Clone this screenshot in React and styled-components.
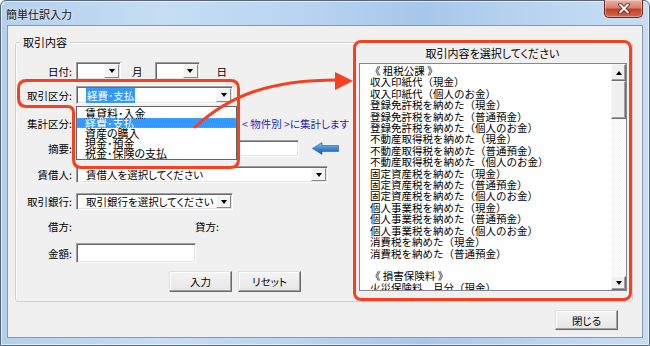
import React from "react";
import styled, { createGlobalStyle } from "styled-components";

const Global = createGlobalStyle`
  html, body { margin: 0; padding: 0; background: #fff; }
  body { font-family: "Noto Sans CJK JP", "Noto Sans", sans-serif; color: #000; }
  * { box-sizing: border-box; }
`;

const Window = styled.div`
  width: 650px;
  height: 346px;
  display: flex;
  flex-direction: column;
  border: 1px solid #56677d;
  border-radius: 6px 6px 0 0;
  padding: 0 6px 7px 6px;
  background: linear-gradient(90deg, #b3cfec 0%, #c6ddf4 25%, #b9d5f1 45%, #a7c7ea 65%, #bcd6f1 85%, #c8ddf2 100%);
  box-shadow: inset 1px 1px 0 rgba(255,255,255,0.6), inset -1px -1px 0 rgba(255,255,255,0.6);
`;

const TitleBar = styled.div`
  height: 24px;
  display: flex;
  align-items: flex-start;
  justify-content: space-between;
  flex-shrink: 0;
`;

const Title = styled.div`
  font-size: 11px;
  line-height: 26px;
  margin-left: -1px;
  color: #1b1b1b;
  font-feature-settings: "palt";
  text-shadow: 0 0 6px rgba(255,255,255,0.9);
`;

const CloseBtn = styled.div`
  width: 39px;
  height: 18px;
  margin-top: -1px;
  border: 1px solid #6a2a1e;
  border-top: none;
  border-radius: 0 0 5px 5px;
  background: linear-gradient(#eab1a5 0%, #d9806d 45%, #c1412a 55%, #d2674f 100%);
  box-shadow: inset 0 0 0 1px rgba(255,255,255,0.35);
  display: flex;
  align-items: center;
  justify-content: center;
`;

const Client = styled.div`
  flex: 1;
  background: #f0f0f0;
  border: 1px solid #8399b4;
  display: flex;
  flex-direction: column;
  padding: 16px 9px 0 7px;
`;

const GroupBox = styled.div`
  position: relative;
  height: 260px;
  border: 1px solid #d0d0d0;
  border-radius: 3px;
  box-shadow: inset 1px 1px 0 #fff;
  display: flex;
`;

const Legend = styled.div`
  position: absolute;
  top: -9px;
  left: 4px;
  padding: 0 3px;
  background: #f0f0f0;
  font-size: 11px;
  line-height: 16px;
  font-feature-settings: "palt";
`;

const Form = styled.div`
  width: 337px;
  flex-shrink: 0;
  display: flex;
  flex-direction: column;
  padding-top: 19px;
`;

const Row = styled.div`
  display: flex;
  align-items: center;
  height: ${(p) => p.$h || 18}px;
  margin-top: ${(p) => p.$mt || 0}px;
  flex-shrink: 0;
`;

const Label = styled.div`
  width: ${(p) => p.$w || 58}px;
  margin-right: 2px;
  padding-right: 2px;
  text-align: right;
  font-size: 10.5px;
  white-space: nowrap;
  flex-shrink: 0;
  font-feature-settings: "palt";
`;

const Unit = styled.div`
  font-size: 10.5px;
  margin: 0 ${(p) => p.$mr}px 0 ${(p) => p.$ml}px;
`;

const Combo = styled.div`
  position: relative;
  width: ${(p) => p.$w}px;
  height: 100%;
  background: #fff;
  border: 1px solid;
  border-color: #a0a0a0 #ffffff #ffffff #a0a0a0;
  box-shadow: inset 1px 1px 0 #696969, inset -1px -1px 0 #e3e3e3;
  display: flex;
  align-items: center;
  flex-shrink: 0;
`;

const ComboText = styled.div`
  flex: 1;
  padding-left: 9px;
  font-size: 10.5px;
  white-space: nowrap;
  overflow: hidden;
  font-feature-settings: "palt";
`;

const Selected = styled.span`
  background: #3399ff;
  color: #fff;
  padding: 0 1px;
`;

const DropBtn = styled.div`
  width: 15px;
  align-self: stretch;
  margin: 1px 1px 1px 0;
  background: #f3f3f3;
  border: 1px solid;
  border-color: #fafafa #8a8a8a #8a8a8a #fafafa;
  display: flex;
  align-items: center;
  justify-content: center;
  flex-shrink: 0;
`;

const Tri = styled.div`
  width: 0;
  height: 0;
  border-left: 3.5px solid transparent;
  border-right: 3.5px solid transparent;
  ${(p) => (p.$up ? "border-bottom: 4px solid #000;" : "border-top: 4px solid #000;")}
`;

const DropList = styled.div`
  position: absolute;
  top: 19px;
  left: -1px;
  width: 161px;
  height: 54px;
  background: #fff;
  border: 1px solid #646464;
  padding-top: 1px;
  z-index: 2;
`;

const DropItem = styled.div`
  height: 10px;
  line-height: 10px;
  padding-left: 8px;
  font-size: 11px;
  white-space: nowrap;
  font-feature-settings: "palt";
  ${(p) =>
    p.$active &&
    `background: #3399ff; color: #fff; outline: 1px dotted #d08a3c; outline-offset: -1px;`}
`;

const Note = styled.div`
  margin-left: 9px;
  font-size: 10.5px;
  color: #1f1fb8;
  white-space: nowrap;
  font-feature-settings: "palt";
`;

const TextInput = styled.div`
  width: ${(p) => p.$w}px;
  height: ${(p) => p.$h}px;
  background: #fff;
  border: 1px solid;
  border-color: #a0a0a0 #ffffff #ffffff #a0a0a0;
  box-shadow: inset 1px 1px 0 #696969, inset -1px -1px 0 #e3e3e3;
  flex-shrink: 0;
`;

const ArrowIcon = styled.svg`
  margin-left: 13px;
  flex-shrink: 0;
`;

const Button = styled.div`
  width: 63px;
  height: ${(p) => p.$h || 21}px;
  margin-left: ${(p) => p.$ml || 0}px;
  background: linear-gradient(#f4f4f4, #e6e6e6);
  border: 1px solid;
  border-color: #e0e0e0 #6a6a6a #6a6a6a #e0e0e0;
  box-shadow: inset -1px -1px 0 #a0a0a0, inset 1px 1px 0 #fff;
  display: flex;
  align-items: center;
  justify-content: center;
  font-size: 10.5px;
  font-feature-settings: "palt";
  flex-shrink: 0;
`;

const Panel = styled.div`
  width: 279px;
  height: 261px;
  margin-top: -3px;
  border: 3px solid #f7401f;
  border-radius: 8px;
  display: flex;
  flex-direction: column;
  flex-shrink: 0;
`;

const PanelTitle = styled.div`
  height: 20px;
  line-height: 21px;
  text-align: center;
  font-size: 11px;
  font-feature-settings: "palt";
`;

const ListBox = styled.div`
  margin: 0 2px 0 3px;
  height: 228px;
  background: #fff;
  border: 1px solid #828790;
  display: flex;
`;

const ListItems = styled.div`
  flex: 1;
  overflow: hidden;
  padding-left: 10px;
  padding-top: 1px;
  font-size: 10.5px;
  line-height: 11.4px;
  white-space: pre;
`;

const ScrollBar = styled.div`
  width: 15px;
  display: flex;
  flex-direction: column;
  background: repeating-conic-gradient(#f2f2f2 0 25%, #ffffff 0 50%) 0 0 / 2px 2px;
`;

const ScrollBtn = styled.div`
  height: ${(p) => p.$h}px;
  background: #f0f0f0;
  border: 1px solid;
  border-color: #f8f8f8 #6f6f6f #6f6f6f #f8f8f8;
  box-shadow: inset -1px -1px 0 #a0a0a0;
  display: flex;
  align-items: center;
  justify-content: center;
  flex-shrink: 0;
`;

const Track = styled.div`
  flex: 1;
`;

const Overlay = styled.svg`
  position: absolute;
  left: 0;
  top: 0;
  overflow: visible;
  pointer-events: none;
  z-index: 3;
`;

const Footer = styled.div`
  display: flex;
  justify-content: flex-end;
  margin-top: 8px;
  padding-right: 15px;
`;

const listItems = [
  "《 租税公課 》",
  "収入印紙代（現金）",
  "収入印紙代（個人のお金）",
  "登録免許税を納めた（現金）",
  "登録免許税を納めた（普通預金）",
  "登録免許税を納めた（個人のお金）",
  "不動産取得税を納めた（現金）",
  "不動産取得税を納めた（普通預金）",
  "不動産取得税を納めた（個人のお金）",
  "固定資産税を納めた（現金）",
  "固定資産税を納めた（普通預金）",
  "固定資産税を納めた（個人のお金）",
  "個人事業税を納めた（現金）",
  "個人事業税を納めた（普通預金）",
  "個人事業税を納めた（個人のお金）",
  "消費税を納めた（現金）",
  "消費税を納めた（普通預金）",
  " ",
  "《 損害保険料 》",
  "火災保険料　月分（現金）",
];

const dropItems = ["賃貸料･入金", "経費･支払", "資産の購入", "現金･預金", "税金･保険の支払"];

function ComboBox({ w, text, selected, children }) {
  return (
    <Combo $w={w}>
      <ComboText>{selected ? <Selected>{text}</Selected> : text}</ComboText>
      <DropBtn>
        <Tri />
      </DropBtn>
      {children}
    </Combo>
  );
}

export default function App() {
  return (
    <>
      <Global />
      <Window>
        <TitleBar>
          <Title>簡単仕訳入力</Title>
          <CloseBtn>
            <svg width="12" height="11" viewBox="0 0 12 11">
              <path d="M2 1.5 L10 9.5 M10 1.5 L2 9.5" stroke="#5a1c12" strokeWidth="3.6" strokeLinecap="round" />
              <path d="M2 1.5 L10 9.5 M10 1.5 L2 9.5" stroke="#ffffff" strokeWidth="2" strokeLinecap="round" />
            </svg>
          </CloseBtn>
        </TitleBar>
        <Client>
          <GroupBox>
            <Legend>取引内容</Legend>
            <Form>
              <Row $h={18}>
                <Label>日付:</Label>
                <ComboBox w={45} text="" />
                <Unit $ml={11} $mr={12}>月</Unit>
                <ComboBox w={45} text="" />
                <Unit $ml={17} $mr={0}>日</Unit>
              </Row>
              <Row $h={18} $mt={6}>
                <Label>取引区分:</Label>
                <ComboBox w={157} text="経費･支払" selected>
                  <DropList>
                    {dropItems.map((t) => (
                      <DropItem key={t} $active={t === "経費･支払"}>
                        {t}
                      </DropItem>
                    ))}
                  </DropList>
                </ComboBox>
              </Row>
              <Row $h={18} $mt={10}>
                <Label>集計区分:</Label>
                <ComboBox w={157} text="" />
                <Note>&lt; 物件別 &gt;に集計します</Note>
              </Row>
              <Row $h={18} $mt={7}>
                <Label>摘要:</Label>
                <TextInput $w={223} $h={17} />
                <ArrowIcon width="27" height="13" viewBox="0 0 27 13">
                  <defs>
                    <linearGradient id="ba" x1="0" y1="0" x2="0" y2="1">
                      <stop offset="0" stopColor="#8fc3f2" />
                      <stop offset="0.5" stopColor="#3f86d6" />
                      <stop offset="1" stopColor="#1c56a8" />
                    </linearGradient>
                  </defs>
                  <path d="M0.5 6.5 L10 0.5 L10 3.5 L26.5 3.5 L26.5 9.5 L10 9.5 L10 12.5 Z" fill="url(#ba)" stroke="#2a5f9e" strokeWidth="0.6" />
                </ArrowIcon>
              </Row>
              <Row $h={17} $mt={9}>
                <Label>賃借人:</Label>
                <ComboBox w={252} text="賃借人を選択してください" />
              </Row>
              <Row $h={17} $mt={10}>
                <Label>取引銀行:</Label>
                <ComboBox w={157} text="取引銀行を選択してください" />
              </Row>
              <Row $h={18} $mt={7}>
                <Label>借方:</Label>
                <Label $w={145}>貸方:</Label>
              </Row>
              <Row $h={20} $mt={8}>
                <Label>金額:</Label>
                <TextInput $w={120} $h={20} />
              </Row>
              <Row $h={21} $mt={8}>
                <Button $ml={153}>入力</Button>
                <Button $ml={6}>リセット</Button>
              </Row>
            </Form>
            <Panel>
              <PanelTitle>取引内容を選択してください</PanelTitle>
              <ListBox>
                <ListItems>
                  {listItems.map((t, i) => (
                    <div key={i}>{t}</div>
                  ))}
                </ListItems>
                <ScrollBar>
                  <ScrollBtn $h={17}>
                    <Tri $up />
                  </ScrollBtn>
                  <ScrollBtn $h={38} />
                  <Track />
                  <ScrollBtn $h={14}>
                    <Tri />
                  </ScrollBtn>
                </ScrollBar>
              </ListBox>
            </Panel>
            <Overlay width="616" height="258" viewBox="0 0 616 258">
              <path
                d="M10.5 37.5 H214.5 Q222.5 37.5 222.5 45.5 V116.5 Q222.5 124.5 214.5 124.5 H65.5 Q57.5 124.5 57.5 116.5 V69.5 Q57.5 63.5 51.5 63.5 H10.5 Q2.5 63.5 2.5 55.5 V45.5 Q2.5 37.5 10.5 37.5 Z"
                fill="none"
                stroke="#f7401f"
                strokeWidth="3"
              />
              <path d="M179 84 C214 52, 254 37, 322 37" fill="none" stroke="#f7401f" strokeWidth="3" strokeLinecap="round" />
              <polygon points="337,38 319,29 319,47" fill="#f7401f" />
            </Overlay>
          </GroupBox>
          <Footer>
            <Button $h={20}>閉じる</Button>
          </Footer>
        </Client>
      </Window>
    </>
  );
}
